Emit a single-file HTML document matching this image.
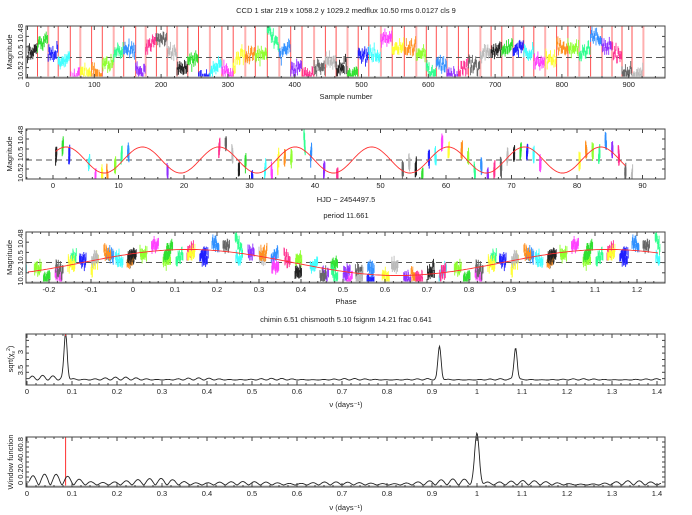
<!DOCTYPE html>
<html><head><meta charset="utf-8"><style>
html,body{margin:0;padding:0;background:#fff;width:692px;height:515px;overflow:hidden}
svg{display:block}
text{font-family:"Liberation Sans",sans-serif;font-size:7.5px;fill:#222}
</style></head><body>
<svg id="s" width="692" height="515" viewBox="0 0 692 515" xmlns="http://www.w3.org/2000/svg">
<text x="346" y="13" text-anchor="middle">CCD 1 star 219 x 1058.2 y 1029.2 medflux 10.50 rms 0.0127 cls 9</text>
<text x="346" y="99" text-anchor="middle">Sample number</text>
<text x="346" y="202" text-anchor="middle">HJD − 2454497.5</text>
<text x="346" y="218" text-anchor="middle">period 11.661</text>
<text x="346" y="304" text-anchor="middle">Phase</text>
<text x="346" y="322" text-anchor="middle">chimin 6.51 chismooth 5.10 fsignm 14.21 frac 0.641</text>
<text x="346" y="407" text-anchor="middle">ν (days⁻¹)</text>
<text x="346" y="510" text-anchor="middle">ν (days⁻¹)</text>
<g id="g"></g>
</svg>
<script>
var out=[];
var seed=12345;function R(){seed=(seed*16807)%2147483647;return seed/2147483647;}
function G(){return (R()+R()+R()-1.5)*0.8;}
var cols=['#222','#30e030','#2020ff','#40ffff','#ff40ff','#ffff30','#ff9020','#90ff30','#30ff90','#3090ff','#9030ff','#ff3090','#666','#bbb'];
var T=[0.4,1.4,2.4,5.4,6.4,7.4,8.2,9.4,10.4,11.4,17.4,25.3,26.3,27.3,28.3,29.3,30.3,32.3,33.3,34.3,35.3,36.3,38.3,39.3,41.3,43.3,53.3,54.3,55.3,56.3,57.3,58.3,59.3,60.3,62.3,63.3,64.3,65.3,66.3,67.3,68.3,69.3,70.3,71.3,72.3,73.3,74.3,80.3,81.3,82.3,83.3,84.3,85.3,86.3,87.3,88.3];
var P=11.661;
function model(t){return 10.5-0.0145*Math.cos(2*Math.PI*(t-2)/P);}
function L(x1,y1,x2,y2,c,w,extra){out.push('<line x1="'+x1.toFixed(1)+'" y1="'+y1.toFixed(1)+'" x2="'+x2.toFixed(1)+'" y2="'+y2.toFixed(1)+'" stroke="'+c+'" stroke-width="'+(w||1)+'"'+(extra||'')+'/>');}
function clip(v,a,b){return Math.max(a,Math.min(b,v));}
var pts=[];var idx=0;var bounds=[];
for(var j=0;j<T.length;j++){
  var n=15+Math.floor(R()*4);var off=G()*0.012;var tr=G()*0.012;
  for(var k=0;k<n;k++){
    var tt=T[j]+k*0.012;
    var m=model(tt)+off+tr*(k/n-0.5)+G()*0.008;
    pts.push({i:idx,t:tt,m:m,c:cols[j%cols.length]});idx++;
  }
  bounds.push(idx);
}
function frame(x1,y1,x2,y2){out.push('<rect x="'+x1+'" y="'+y1+'" width="'+(x2-x1)+'" height="'+(y2-y1)+'" fill="none" stroke="#444" stroke-width="1"/>');}
function xt(x0,sc,vals,y1,y2,fmt,minor){
  vals.forEach(function(v){var x=x0+sc*v;L(x,y2,x,y2-4,'#444');L(x,y1,x,y1+4,'#444');out.push('<text x="'+x.toFixed(1)+'" y="'+(y2+9)+'" text-anchor="middle">'+fmt(v)+'</text>');});
  if(minor)minor.forEach(function(v){var x=x0+sc*v;L(x,y2,x,y2-2,'#444');L(x,y1,x,y1+2,'#444');});
}
function ylab(y1,y2,cx,labs,name){
  var cy=(y1+y2)/2;
  out.push('<text transform="translate('+(cx+3)+','+cy+') rotate(-90)" text-anchor="middle">'+labs+'</text>');
  out.push('<text transform="translate('+(cx-8)+','+cy+') rotate(-90)" text-anchor="middle">'+name+'</text>');
}
function rticks(x1,x2,y1,y2,n){for(var i=1;i<n;i++){var y=y1+(y2-y1)*i/n;L(x2,y,x2-3,y,'#444');L(x1,y,x1+3,y,'#444');}}
var X1=26,X2=665;
(function(){
  var y1=26,y2=78,ym=57.5,sc=0.668,x0=27.5;
  bounds.forEach(function(b,i){var x=x0+sc*b;if(x>X2)return;L(x,y1,x,y2,i%3==1?'#ffb0b0':'#ff5050',i%3==1?2:1);});
  L(X1,ym,X2,ym,'#555',1,' stroke-dasharray="6,4"');
  pts.forEach(function(p){var x=x0+sc*p.i;var y=ym+(p.m-10.5)*1000;if(x>X2)return;L(x,clip(y-4,y1,y2),x,clip(y+4,y1,y2),p.c,0.9);});
  L(X1,y2-0.5,X2,y2-0.5,'#bbb',2);
  frame(X1,y1,X2,y2);
  var v=[];for(var i=0;i<=900;i+=100)v.push(i);var mi=[];for(var i=20;i<950;i+=20)if(i%100)mi.push(i);
  xt(x0,sc,v,y1,y2,function(a){return a;},mi);
  rticks(X1,X2,y1,y2,5);
  ylab(y1,y2,20,'10.52  10.5  10.48','Magnitude');
})();
(function(){
  var y1=129,y2=179,ym=160,sc=6.55,x0=53;
  L(X1,ym,X2,ym,'#555',1,' stroke-dasharray="6,4"');
  pts.forEach(function(p){var x=x0+sc*p.t;var y=ym+(p.m-10.5)*900;L(x,clip(y-4,y1,y2),x,clip(y+4,y1,y2),p.c,1);});
  var d='';for(var t=0.4;t<=87.5;t+=0.2){var x=x0+sc*t,y=ym+(model(t)-10.5)*900;d+=(d?'L':'M')+x.toFixed(1)+','+y.toFixed(1);}
  out.push('<path d="'+d+'" fill="none" stroke="#ff3030" stroke-width="0.9"/>');
  frame(X1,y1,X2,y2);
  var v=[];for(var i=0;i<=90;i+=10)v.push(i);var mi=[];for(var i=-4;i<=93;i+=2)if(i%10)mi.push(i);
  xt(x0,sc,v,y1,y2,function(a){return a;},mi);
  rticks(X1,X2,y1,y2,5);
  ylab(y1,y2,20,'10.52  10.5  10.48','Magnitude');
})();
(function(){
  var y1=232,y2=283,ym=262.5,sc=420,x0=133,T0=0.48;
  L(X1,ym,X2,ym,'#555',1,' stroke-dasharray="6,4"');
  pts.forEach(function(p){var ph=((p.t-T0)/P)%1;[ph-1,ph,ph+1].forEach(function(q){if(q<-0.255||q>1.255)return;var x=x0+sc*q;var y=ym+(p.m-10.5)*900;L(x,clip(y-4,y1,y2),x,clip(y+4,y1,y2),p.c,0.9);});});
  var d='';for(var q=-0.25;q<=1.25;q+=0.005){var t=T0+q*P;var x=x0+sc*q,y=ym+(model(t)-10.5)*900;d+=(d?'L':'M')+x.toFixed(1)+','+y.toFixed(1);}
  out.push('<path d="'+d+'" fill="none" stroke="#ff3030" stroke-width="0.9"/>');
  L(X1,y2-0.5,X2,y2-0.5,'#bbb',2);
  frame(X1,y1,X2,y2);
  var v=[];for(var i=-2;i<=12;i++)v.push(i/10);var mi=[];for(var i=-12;i<=62;i++)if(i%5)mi.push(i/50);
  xt(x0,sc,v,y1,y2,function(a){return Math.round(a*10)/10;},mi);
  rticks(X1,X2,y1,y2,5);
  ylab(y1,y2,20,'10.52  10.5  10.48','Magnitude');
})();
function gauss(x,m,s){return Math.exp(-(x-m)*(x-m)/(2*s*s));}
(function(){
  var y1=334,y2=385,x0=27,sc=450;
  var d='';for(var nu=0.005;nu<=1.41;nu+=0.0015){
    var b=(4*Math.exp(-nu*4)+1.3)*Math.pow(Math.abs(Math.sin(Math.PI*nu/0.024+nu*5)),2)*(0.6+0.4*Math.sin(nu*37));
    var h=3+b+45*gauss(nu,0.0858,0.0035)+33*gauss(nu,0.9167,0.0035)+32*gauss(nu,1.0858,0.0035);
    var y=383-h;d+=(d?'L':'M')+(x0+sc*nu).toFixed(1)+','+y.toFixed(1);}
  out.push('<path d="'+d+'" fill="none" stroke="#222" stroke-width="0.9"/>');
  L(x0+sc*0.0858,y1,x0+sc*0.0858,336,'#ff3030',1);
  frame(X1,y1,X2,y2);
  var v=[];for(var i=0;i<=14;i++)v.push(i/10);var mi=[];for(var i=1;i<=70;i++)if(i%5)mi.push(i/50);
  xt(x0,sc,v,y1,y2,function(a){return Math.round(a*10)/10;},mi);
  rticks(X1,X2,y1,y2,8);
  out.push('<text transform="translate(23,370) rotate(-90)" text-anchor="middle">3.5</text>');
  out.push('<text transform="translate(23,352) rotate(-90)" text-anchor="middle">3</text>');
  out.push('<text transform="translate(13,359) rotate(-90)" text-anchor="middle">sqrt(χ<tspan font-size="5" dy="2">ν</tspan><tspan font-size="5" dy="-5">2</tspan><tspan dy="3">)</tspan></text>');
})();
(function(){
  var y1=437,y2=487,x0=27,sc=450;
  var d='';for(var nu=0.005;nu<=1.41;nu+=0.0015){
    var a=10*Math.exp(-nu*5)+2.5+2*Math.sin(nu*13)*Math.sin(nu*13)+7*gauss(nu,1.0,0.05)+2*gauss(nu,0.33,0.05);
    var b=a*Math.pow(Math.abs(Math.sin(Math.PI*nu/0.028+nu*9)),1.5)*(0.65+0.35*Math.sin(nu*29));
    var h=1+b+48*gauss(nu,1.0,0.005);
    var y=486-h;d+=(d?'L':'M')+(x0+sc*nu).toFixed(1)+','+y.toFixed(1);}
  L(x0+sc*0.0858,y1,x0+sc*0.0858,y2,'#ff3030',1);
  L(X1,y2-0.5,X2,y2-0.5,'#bbb',2);
  out.push('<path d="'+d+'" fill="none" stroke="#222" stroke-width="0.9"/>');
  frame(X1,y1,X2,y2);
  var v=[];for(var i=0;i<=14;i++)v.push(i/10);var mi=[];for(var i=1;i<=70;i++)if(i%5)mi.push(i/50);
  xt(x0,sc,v,y1,y2,function(a){return Math.round(a*10)/10;},mi);
  rticks(X1,X2,y1,y2,10);
  out.push('<text transform="translate(23,461) rotate(-90)" text-anchor="middle">0   0.20.40.60.8</text>');
  out.push('<text transform="translate(13,462) rotate(-90)" text-anchor="middle">Window function</text>');
})();
document.getElementById('g').innerHTML=out.join('');
</script>
</body></html>
